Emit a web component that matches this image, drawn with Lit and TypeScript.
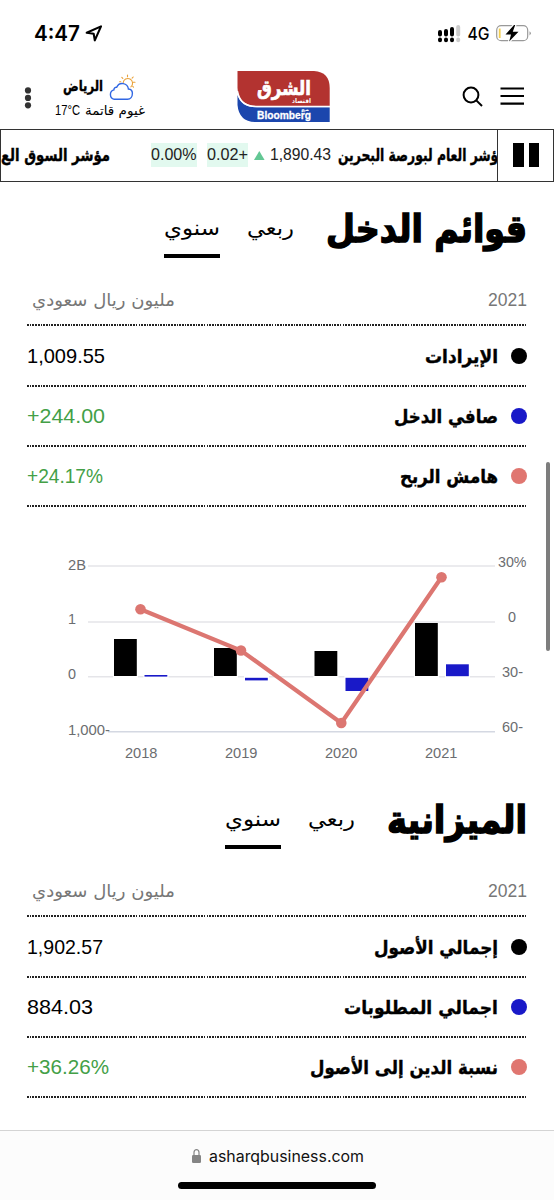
import { LitElement, html, svg, css } from "lit";
import { customElement } from "lit/decorators.js";

/* One line of text set to a fixed measure: the box is w x h, the baseline sits at b. */
const line = (text: string, w: number, h: number, b: number, size: number, cls = "") => html`
  <svg class="line" width=${w} height=${h} role="text">
    <text class=${cls} x="0" y=${b} font-size=${size} textLength=${w} lengthAdjust="spacingAndGlyphs">${text}</text>
  </svg>`;

interface Row { label: string; lw: number; value: string; vw: number; color: string; up?: boolean }

const income: Row[] = [
  { label: "الإيرادات", lw: 73, value: "1,009.55", vw: 78, color: "black" },
  { label: "صافي الدخل", lw: 104, value: "+244.00", vw: 78, color: "blue", up: true },
  { label: "هامش الربح", lw: 98, value: "+24.17%", vw: 76, color: "coral", up: true },
];
const balance: Row[] = [
  { label: "إجمالي الأصول", lw: 124, value: "1,902.57", vw: 76, color: "black" },
  { label: "اجمالي المطلوبات", lw: 154, value: "884.03", vw: 66, color: "blue" },
  { label: "نسبة الدين إلى الأصول", lw: 188, value: "+36.26%", vw: 82, color: "coral", up: true },
];

const bars = [
  [114, 99, 37, 0], [144.5, 135, 1.6, 1], [214, 108, 28, 0], [245, 137.8, 2.6, 1],
  [314.5, 111, 25, 0], [345.5, 137.8, 13.2, 1], [415, 83, 53, 0], [446, 124.3, 11.9, 1],
];
const points = [[140.5, 69.3], [241, 110.5], [341.3, 183], [441.5, 37.2]];

@customElement("app-root")
export class AppRoot extends LitElement {
  static styles = css`
    :host { display: block; height: 1200px; overflow: hidden; background: #fff; color: #000;
      font-family: "Liberation Sans", "DejaVu Sans", sans-serif; }
    * { box-sizing: border-box; }
    .page { position: relative; height: 1200px; display: flex; flex-direction: column; }
    svg { display: block; flex: none; }
    .line { overflow: visible; direction: ltr; }
    .line text { font-family: "Liberation Sans", "DejaVu Sans", sans-serif; fill: currentColor; }
    .line .ar { font-family: "DejaVu Sans", sans-serif; }
    .line .bold { font-family: "DejaVu Sans", sans-serif; font-weight: 700; stroke: currentColor; stroke-width: 0.4px; }
    .line .title { font-family: "DejaVu Sans", sans-serif; font-weight: 700; stroke: currentColor; stroke-width: 1.5px; }
    .line .ui { font-family: Inter, sans-serif; }
    .line .clock { font-family: Inter, sans-serif; font-weight: 600; }
    .status { height: 62px; padding: 23px 23px 0 34px; display: flex; justify-content: space-between; }
    .group { display: flex; }
    .header { height: 66px; padding: 0 29px 0 24px; display: flex; align-items: flex-start; }
    .dots { margin-top: 24px; }
    .weather { width: 92px; margin: 11px 0 0 22px; display: flex; flex-direction: column; align-items: flex-end; }
    .city { display: flex; gap: 5px; padding-right: 9px; }
    .cond { display: flex; gap: 5px; margin-top: 1px; }
    .logo { margin: 9px 0 0 92px; }
    .search { margin: 23px 0 0 132px; }
    .menu { margin: 24px 0 0 16px; }
    .ticker { height: 53px; border: 1.4px solid #333; margin-top: 1px; display: flex; }
    .tape { width: 496px; display: flex; align-items: flex-start; overflow: hidden; padding-top: 13px; flex: none; }
    .pause { flex: 1; border-left: 1px solid #333; display: flex; gap: 5px; padding: 13px 0 0 15px; }
    .pause i { width: 10.5px; height: 24px; background: #000; }
    .chip { background: #e2f9ef; height: 24px; margin-right: 10px; }
    .percent { margin-left: 41px; }
    .rise { margin-left: -4px; }
    .price { margin-left: 4px; }
    .name { margin-left: 7px; }
    .quote { color: #222; }
    .section { padding: 0 27px; height: 326px; direction: rtl; }
    .gap { height: 32px; }
    .head { display: flex; height: 94px; padding-top: 19px; }
    .tab { margin-right: 32px; padding-top: 7px; height: 57px; }
    .tab.on { margin-right: 27px; border-bottom: 4px solid #000; }
    .meta { display: flex; justify-content: space-between; height: 48.4px; padding: 13.5px 0 0 5px; color: #777; }
    .row { display: flex; align-items: center; height: 60.3px; padding-top: 2px; }
    .rule { height: 2px; margin-bottom: -2px;
      background: repeating-linear-gradient(to right, #222 0 1.7px, #fff 1.7px 2.72px); }
    .dot { width: 16px; height: 16px; border-radius: 50%; margin-left: 13px; }
    .black { background: #000; } .blue { background: #1919c8; } .coral { background: #e07670; }
    .value { margin-right: auto; }
    .up { color: #43a047; }
    .chart text { font-family: "Liberation Sans", sans-serif; font-size: 14.6px; fill: #6b6d70; }
    .scroll { position: absolute; left: 546px; top: 462px; width: 4px; height: 189px; border-radius: 2px; background: #7d7d7d; }
    .footer { position: absolute; left: 0; top: 1130px; width: 554px; height: 70px; border-top: 1px solid #d4d4d4;
      background: #fcfcfc; display: flex; flex-direction: column; align-items: center; }
    .url { display: flex; gap: 8px; margin: 15px 0 0 2px; height: 36px; color: #111; }
    .home { width: 198px; height: 7px; border-radius: 3.5px; background: #000; }
  `;

  private section(title: string, tw: number, rows: Row[]) {
    return html`<section class="section">
      <div class="head">
        ${line(title, tw, 60, 41, 38, "title")}
        <div class="tab">${line("ربعي", 47, 30, 27, 20, "ar")}</div>
        <div class="tab on">${line("سنوي", 56, 30, 27, 20, "ar")}</div>
      </div>
      <div class="meta">
        ${line("2021", 39, 24, 16, 18.5)}
        ${line("مليون ريال سعودي", 143, 24, 16, 17.5, "ar")}
      </div>
      <div class="rule"></div>
      ${rows.map((r) => html`<div class="row">
        <span class="dot ${r.color}"></span>
        ${line(r.label, r.lw, 24, 19, 19, "bold")}
        <div class="value ${r.up ? "up" : ""}">${line(r.value, r.vw, 24, 19, 21)}</div>
      </div><div class="rule"></div>`)}
    </section>`;
  }

  private chart() {
    const labels: [string, number, number, number][] = [
      ["2B", 68, 29.5, 18], ["1", 68, 84.3, 8], ["0", 68, 139.3, 8], ["1,000-", 68, 194.5, 42],
      ["30%", 498, 27, 28.5], ["0", 508, 82, 8], ["30-", 502, 137, 21], ["60-", 502, 191.5, 21],
      ["2018", 125, 218, 32.5], ["2019", 225, 218, 32.5], ["2020", 325, 218, 32.5], ["2021", 425, 218, 32.5],
    ];
    return html`<svg class="chart" width="554" height="233" viewBox="0 0 554 233">
      ${[26, 82, 136.8].map((y) => svg`<path d="M88 ${y}H495" stroke="#e5e5e9" stroke-width="1.5"/>`)}
      <path d="M108 191.8H495" stroke="#d4d8e2" stroke-width="1.5"/>
      ${bars.map(([x, y, h, b]) => svg`<rect x=${x - 1} y="135" width="25" height="4" fill="#fff"/>
        <rect x=${x} y=${y} width="22.8" height=${h} fill=${b ? "#1919c8" : "#000"}/>`)}
      <polyline points=${points.map((p) => p.join()).join(" ")} fill="none" stroke="#dc7671" stroke-width="4.2"/>
      ${points.map(([x, y]) => svg`<circle cx=${x} cy=${y} r="5.3" fill="#dc7671"/>`)}
      ${labels.map(([t, x, y, w]) => svg`<text x=${x} y=${y} textLength=${w} lengthAdjust="spacingAndGlyphs">${t}</text>`)}
    </svg>`;
  }

  render() {
    return html`<main class="page">
      <div class="status">
        <div class="group">
          ${line("4:47", 46, 24, 18, 21, "clock")}
          <svg width="24" height="24" viewBox="80 23 24 24"><path d="M86.7 32.8 101 26.4 94.8 40.4 93.7 33.8Z" fill="none" stroke="#000" stroke-width="2.1" stroke-linejoin="round"/></svg>
        </div>
        <div class="group">
          <svg width="93" height="24" viewBox="438 23 93 24">
            <path d="M440 32v2.5M446 31v3.5M452 29v5.5M440 39.5v.8M446 39.5v.8M452 39.5v.8" stroke="#000" stroke-width="4" stroke-linecap="round"/>
            <path d="M458.2 27v7.5M458.2 39.5v.8" stroke="#ccc" stroke-width="4" stroke-linecap="round"/>
            <text x="467.5" y="39.8" font-family="Inter" font-weight="500" font-size="17" textLength="22" lengthAdjust="spacingAndGlyphs">4G</text>
            <rect x="496.7" y="25.7" width="31" height="15" rx="4.5" fill="none" stroke="#999" stroke-width="1.2"/>
            <path d="M499.7 28.5v9.5" stroke="#f4cf52" stroke-width="1.8"/>
            <path d="M529.5 31.2q2.8 2 0 4.2Z" fill="#999"/>
            <path d="M514 25 505.5 34.5H511L509.2 41.5 518.5 31.8H512.8L515.2 25Z" fill="#000" stroke="#fff" stroke-width="2.5" paint-order="stroke"/>
          </svg>
        </div>
      </div>
      <div class="header">
        <svg class="dots" width="8" height="24" viewBox="0 0 8 24"><g fill="#333"><circle cx="4" cy="4.4" r="3.1"/><circle cx="4" cy="11.9" r="3.1"/><circle cx="4" cy="19.3" r="3.1"/></g></svg>
        <div class="weather">
          <div class="city">
            ${line("الرياض", 40, 28, 18, 15, "bold")}
            <svg width="28" height="28" viewBox="109 73 28 28" fill="none" stroke-linecap="round">
              <path d="M124.2 82.8a4.7 4.7 0 1 1 7.7 4M128.5 75v1.7M122.8 77.3l1 1M134.2 77l-1.1 1.2M136 82.3h-1.7M134.5 87.2l-.8-.8M120.6 81.8h1.2" stroke="#e9a23b" stroke-width="1.1"/>
              <path d="M115.2 99.2a4.8 4.8 0 0 1-.3-9.3c.1-1.9 1.4-2.8 2.8-2.6a6.1 6.1 0 0 1 11.7 1.7c2.2.2 4 1.8 4 4.3 0 3.3-1.9 5.9-4.9 5.9Z" stroke="#3167e3" stroke-width="1.4"/>
            </svg>
          </div>
          <div class="cond">
            ${line("17°C", 25, 20, 13, 14)}
            ${line("غيوم قاتمة", 60, 20, 13, 13, "ar")}
          </div>
        </div>
        <svg class="logo" width="93" height="51" viewBox="237 71 93 51">
          <path d="M237.5 71H314Q329.7 72 329.7 88V106H256Q238 105 237.5 88Z" fill="#b33330"/>
          <path d="M237.5 95Q241 107.2 256 107.2H329.7V122H255Q239 121.5 237.5 105Z" fill="#1b46ad"/>
          <path d="M237.5 91Q240 106.5 257 106.5H330" fill="none" stroke="#fff" stroke-width="1.4"/>
          <g fill="#fff" font-family="DejaVu Sans" font-weight="700">
            <text x="257" y="94.5" font-size="20" stroke="#fff" stroke-width=".7" textLength="54" lengthAdjust="spacingAndGlyphs">الشرق</text>
            <text x="292" y="102.5" font-size="6.5" textLength="19" lengthAdjust="spacingAndGlyphs">اقتصاد</text>
            <text x="301" y="110.5" font-size="4.5" textLength="8" lengthAdjust="spacingAndGlyphs">مع</text>
            <text x="257" y="119" font-family="Liberation Sans" stroke="#fff" stroke-width=".3" font-size="11.5" textLength="54" lengthAdjust="spacingAndGlyphs">Bloomberg</text>
          </g>
        </svg>
        <svg class="search" width="22" height="24" viewBox="462 85 22 24"><g fill="none" stroke="#000" stroke-width="2"><circle cx="471" cy="95" r="7.4"/><path d="M476.3 100.4 482 106"/></g></svg>
        <svg class="menu" width="25" height="22" viewBox="500 86 25 22"><path d="M500.5 88.5H524M500.5 96H524M500.5 103.6H524" stroke="#000" stroke-width="2.1"/></svg>
      </div>
      <div class="ticker">
        <div class="tape">
          ${line("مؤشر السوق الع", 109, 24, 18, 17, "bold")}
          <div class="chip quote percent">${line("0.00%", 45.5, 24, 17, 16)}</div>
          <div class="chip quote">${line("0.02+", 41, 24, 17, 16)}</div>
          <svg class="rise" width="12" height="24" viewBox="0 0 12 24"><path d="M0 17 5.3 8 10.6 17Z" fill="#63c794"/></svg>
          <div class="quote price">${line("1,890.43", 61, 24, 17, 16)}</div>
          <div class="name">${line("مؤشر العام لبورصة البحرين", 168, 24, 18, 17, "bold")}</div>
        </div>
        <div class="pause"><i></i><i></i></div>
      </div>
      ${this.section("قوائم الدخل", 201, income)}
      <div class="gap"></div>
      ${this.chart()}
      ${this.section("الميزانية", 140, balance)}
      <div class="scroll"></div>
      <footer class="footer">
        <div class="url">
          <svg width="9" height="22" viewBox="0 0 9 22"><rect y="9" width="9" height="8" rx="1.2" fill="#858585"/><path d="M2 10V6.5a2.5 2.8 0 0 1 5 0V10" fill="none" stroke="#858585" stroke-width="1.2"/></svg>
          ${line("asharqbusiness.com", 155, 22, 16, 16, "ui")}
        </div>
        <div class="home"></div>
      </footer>
    </main>`;
  }
}
